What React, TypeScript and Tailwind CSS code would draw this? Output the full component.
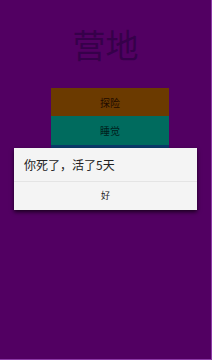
import React from 'react';

const App: React.FC = () => {
  return (
    <div
      className="relative w-[212px] h-[360px] overflow-hidden bg-[#520062] border-r border-b border-[#8c3aa6]"
      style={{ fontFamily: '"Noto Sans CJK SC", "Liberation Sans", sans-serif' }}
    >
      {/* Camp screen */}
      <div className="flex flex-col pt-[24px]">
        <h1 className="self-center text-[33px] leading-[40px] text-[#36004a]">营地</h1>
        <div className="mt-[24px] ml-[51px] w-[118px] flex flex-col">
          <button className="h-[28px] bg-[#6b3a00] text-[10px] text-[#1e0a00]">探险</button>
          <button className="h-[29px] bg-[#006b5e] text-[10px] text-[#00201c]">睡觉</button>
          <div className="h-[29px] bg-[#0a3a6a]" />
        </div>
      </div>

      {/* Dialog */}
      <div className="absolute left-[14px] top-[148px] w-[183px] bg-[#f4f4f4] shadow-[0_2px_4px_rgba(0,0,0,0.7)]">
        <div className="h-[33px] flex items-center pl-[10px] text-[12px] text-[#222222]">
          你死了，活了5天
        </div>
        <div className="h-px bg-[#e4e4e4]" />
        <div className="h-[28px] flex items-center justify-center text-[9px] text-[#222222]">好</div>
      </div>
    </div>
  );
};

export default App;
